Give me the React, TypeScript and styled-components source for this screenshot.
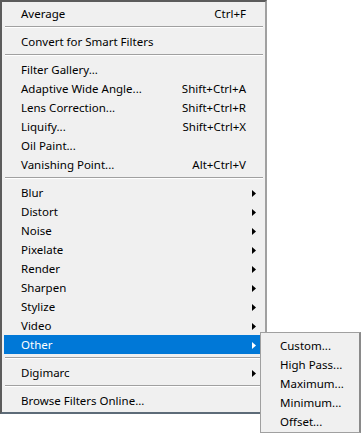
import React from 'react';
import styled, { createGlobalStyle } from 'styled-components';

const GlobalStyle = createGlobalStyle`
  html, body {
    margin: 0;
    padding: 0;
    background: #ffffff;
  }
  body {
    font-family: 'Noto Sans', 'Open Sans', sans-serif;
    font-size: 11.5px;
    color: #000;
  }
`;

const Page = styled.div`
  position: relative;
  width: 362px;
  height: 434px;
`;

const Menu = styled.ul`
  list-style: none;
  margin: 0;
  box-sizing: border-box;
  width: 267px;
  padding: 2px 2px;
  background: #f0f0f0;
  border-top: 2px solid #5b5b5b;
  border-left: 2px solid #5b5b5b;
  border-right: 2px solid #a0a0a0;
  border-bottom: 2px solid #5d6b78;
  display: flex;
  flex-direction: column;
`;

const Item = styled.li<{ $active?: boolean }>`
  height: 19px;
  display: grid;
  grid-template-columns: 1fr auto 17px;
  align-items: center;
  padding-left: 17px;
  background: ${(p) => (p.$active ? '#0078d7' : 'transparent')};
  color: ${(p) => (p.$active ? '#ffffff' : '#000000')};
  white-space: nowrap;
  cursor: default;
`;

const Label = styled.span`
  line-height: 20px;
`;

const Shortcut = styled.span`
  text-align: right;
  line-height: 20px;
`;

const ArrowCell = styled.span`
  display: flex;
  align-items: center;
  justify-content: center;
  padding-right: 2px;
`;

const Separator = styled.li`
  height: 9px;
  padding-top: 3px;
  box-sizing: border-box;

  &::before {
    content: '';
    display: block;
    margin: 0 0 0 1px;
    height: 1px;
    background: #a0a0a0;
    border-bottom: 1px solid #ffffff;
  }
`;

const SubMenu = styled.ul`
  position: absolute;
  left: 260px;
  top: 332px;
  list-style: none;
  margin: 0;
  box-sizing: border-box;
  width: 101px;
  padding: 3px 0 1px;
  background: #f0f0f0;
  border: 1px solid #a0a0a0;
  border-right: 2px solid #8a8a8a;
  display: flex;
  flex-direction: column;
`;

const SubItem = styled.li`
  height: 19px;
  line-height: 20px;
  padding-left: 19px;
  white-space: nowrap;
`;

const Arrow = ({ color }: { color: string }) => (
  <svg width="4" height="7" viewBox="0 0 4 7">
    <polygon points="0,0 4,3.5 0,7" fill={color} />
  </svg>
);

type Entry =
  | { kind: 'sep' }
  | { kind: 'item'; label: string; shortcut?: string; sub?: boolean; active?: boolean };

const entries: Entry[] = [
  { kind: 'item', label: 'Average', shortcut: 'Ctrl+F' },
  { kind: 'sep' },
  { kind: 'item', label: 'Convert for Smart Filters' },
  { kind: 'sep' },
  { kind: 'item', label: 'Filter Gallery...' },
  { kind: 'item', label: 'Adaptive Wide Angle...', shortcut: 'Shift+Ctrl+A' },
  { kind: 'item', label: 'Lens Correction...', shortcut: 'Shift+Ctrl+R' },
  { kind: 'item', label: 'Liquify...', shortcut: 'Shift+Ctrl+X' },
  { kind: 'item', label: 'Oil Paint...' },
  { kind: 'item', label: 'Vanishing Point...', shortcut: 'Alt+Ctrl+V' },
  { kind: 'sep' },
  { kind: 'item', label: 'Blur', sub: true },
  { kind: 'item', label: 'Distort', sub: true },
  { kind: 'item', label: 'Noise', sub: true },
  { kind: 'item', label: 'Pixelate', sub: true },
  { kind: 'item', label: 'Render', sub: true },
  { kind: 'item', label: 'Sharpen', sub: true },
  { kind: 'item', label: 'Stylize', sub: true },
  { kind: 'item', label: 'Video', sub: true },
  { kind: 'item', label: 'Other', sub: true, active: true },
  { kind: 'sep' },
  { kind: 'item', label: 'Digimarc', sub: true },
  { kind: 'sep' },
  { kind: 'item', label: 'Browse Filters Online...' },
];

const otherItems = ['Custom...', 'High Pass...', 'Maximum...', 'Minimum...', 'Offset...'];

export default function App() {
  return (
    <Page>
      <GlobalStyle />
      <Menu>
        {entries.map((e, i) =>
          e.kind === 'sep' ? (
            <Separator key={i} />
          ) : (
            <Item key={i} $active={e.active}>
              <Label>{e.label}</Label>
              <Shortcut>{e.shortcut}</Shortcut>
              <ArrowCell>{e.sub && <Arrow color={e.active ? '#ffffff' : '#000000'} />}</ArrowCell>
            </Item>
          )
        )}
      </Menu>
      <SubMenu>
        {otherItems.map((label) => (
          <SubItem key={label}>{label}</SubItem>
        ))}
      </SubMenu>
    </Page>
  );
}
